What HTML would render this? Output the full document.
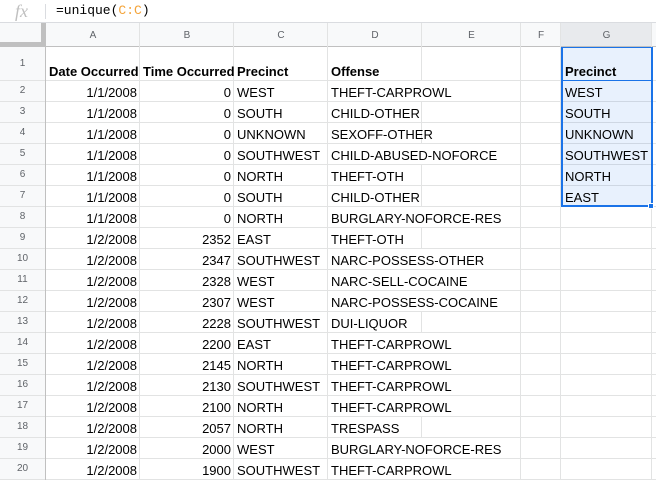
<!DOCTYPE html><html><head><style>
body{margin:0;width:656px;height:480px;overflow:hidden;background:#fff;font-family:"Liberation Sans",Arial,sans-serif;position:relative}
.a{position:absolute;box-sizing:border-box}
.c{position:absolute;font-size:13px;color:#000;white-space:nowrap;line-height:21px;height:21px;overflow:visible}
.h{position:absolute;font-size:10px;color:#5f6368;text-align:center}
</style></head><body>
<div class="a" style="left:0;top:0;width:656px;height:23px;background:#fff;border-bottom:1px solid #dadce0"></div>
<div class="a" style="left:15px;top:1px;font-family:'Liberation Serif',serif;font-style:italic;font-size:18px;line-height:20px;color:#c0c0c0">fx</div>
<div class="a" style="left:45px;top:4px;width:1px;height:15px;background:#dadce0"></div>
<div class="a" style="left:56px;top:3px;font:13px 'Liberation Mono',monospace;color:#000">=unique(<span style="color:#f4a43a">C:C</span>)</div>
<div class="a" style="left:0;top:23px;width:656px;height:24px;background:#f8f9fa"></div>
<div class="a" style="left:0;top:23px;width:46px;height:457px;background:#f8f9fa"></div>
<div class="a" style="left:561px;top:23px;width:91px;height:24px;background:#e8eaed"></div>
<div id="g"></div>
<script>
var g=document.getElementById('g'),h='';
var cols=[46,140,234,328,422,521,561,652,700],L='ABCDEFGH';
for(var r=0;r<=20;r++){var y=r==0?46:80+21*(r-1);h+='<div class="a" style="left:0;top:'+y+'px;width:656px;height:1px;background:'+(r==0?'#c0c0c0':'#e2e3e3')+'"></div>';}
for(var i=0;i<cols.length-1;i++){h+='<div class="a" style="left:'+(cols[i]-1)+'px;top:23px;width:1px;height:457px;background:'+(i==0?'#c0c0c0':'#e2e3e3')+'"></div>';
h+='<div class="h" style="left:'+cols[i]+'px;top:30px;width:'+(cols[i+1]-cols[i])+'px">'+L[i]+'</div>';}
h+='<div class="a" style="left:0;top:23px;width:45px;height:23px;border-right:4px solid #c0c0c0;border-bottom:4px solid #c0c0c0;background:#f8f9fa"></div>';
for(var r=1;r<=20;r++){var tp=r==1?47:80+21*(r-2)+1,ht=r==1?33:20;h+='<div class="h" style="left:0;top:'+(tp+ht/2-6)+'px;width:45px">'+r+'</div>';}
var d=[["1/1/2008",0,"WEST","THEFT-CARPROWL"],["1/1/2008",0,"SOUTH","CHILD-OTHER"],["1/1/2008",0,"UNKNOWN","SEXOFF-OTHER"],["1/1/2008",0,"SOUTHWEST","CHILD-ABUSED-NOFORCE"],["1/1/2008",0,"NORTH","THEFT-OTH"],["1/1/2008",0,"SOUTH","CHILD-OTHER"],["1/1/2008",0,"NORTH","BURGLARY-NOFORCE-RES"],["1/2/2008",2352,"EAST","THEFT-OTH"],["1/2/2008",2347,"SOUTHWEST","NARC-POSSESS-OTHER"],["1/2/2008",2328,"WEST","NARC-SELL-COCAINE"],["1/2/2008",2307,"WEST","NARC-POSSESS-COCAINE"],["1/2/2008",2228,"SOUTHWEST","DUI-LIQUOR"],["1/2/2008",2200,"EAST","THEFT-CARPROWL"],["1/2/2008",2145,"NORTH","THEFT-CARPROWL"],["1/2/2008",2130,"SOUTHWEST","THEFT-CARPROWL"],["1/2/2008",2100,"NORTH","THEFT-CARPROWL"],["1/2/2008",2057,"NORTH","TRESPASS"],["1/2/2008",2000,"WEST","BURGLARY-NOFORCE-RES"],["1/2/2008",1900,"SOUTHWEST","THEFT-CARPROWL"]];
var gv=["WEST","SOUTH","UNKNOWN","SOUTHWEST","NORTH","EAST"];
h+='<div class="a" style="left:561px;top:47px;width:92px;height:160px;background:rgba(26,115,232,0.1);border:2px solid #1a73e8;border-top-width:1px"></div>';
h+='<div class="a" style="left:562px;top:80px;width:90px;height:1px;background:#1a73e8"></div>';
h+='<div class="a" style="left:648px;top:203px;width:6px;height:6px;background:#1a73e8;border:1px solid #fff"></div>';
var hy=61;
h+='<div class="c" style="left:49px;top:'+hy+'px;font-weight:bold">Date Occurred</div><div class="c" style="left:143px;top:'+hy+'px;font-weight:bold">Time Occurred</div><div class="c" style="left:237px;top:'+hy+'px;font-weight:bold">Precinct</div><div class="c" style="left:331px;top:'+hy+'px;font-weight:bold">Offense</div><div class="c" style="left:565px;top:'+hy+'px;font-weight:bold">Precinct</div>';
for(var i=0;i<d.length;i++){var y=82+21*i;
if(d[i][3].length>13)h+='<div class="a" style="left:420px;top:'+(81+21*i)+'px;width:3px;height:20px;background:#fff"></div>';
h+='<div class="c" style="left:46px;width:91px;text-align:right;top:'+y+'px">'+d[i][0]+'</div>';
h+='<div class="c" style="left:140px;width:91px;text-align:right;top:'+y+'px">'+d[i][1]+'</div>';
h+='<div class="c" style="left:237px;top:'+y+'px">'+d[i][2]+'</div>';
h+='<div class="c" style="left:331px;top:'+y+'px">'+d[i][3]+'</div>';
if(i<6)h+='<div class="c" style="left:565px;top:'+y+'px">'+gv[i]+'</div>';}
g.innerHTML=h;
</script>
</body></html>
